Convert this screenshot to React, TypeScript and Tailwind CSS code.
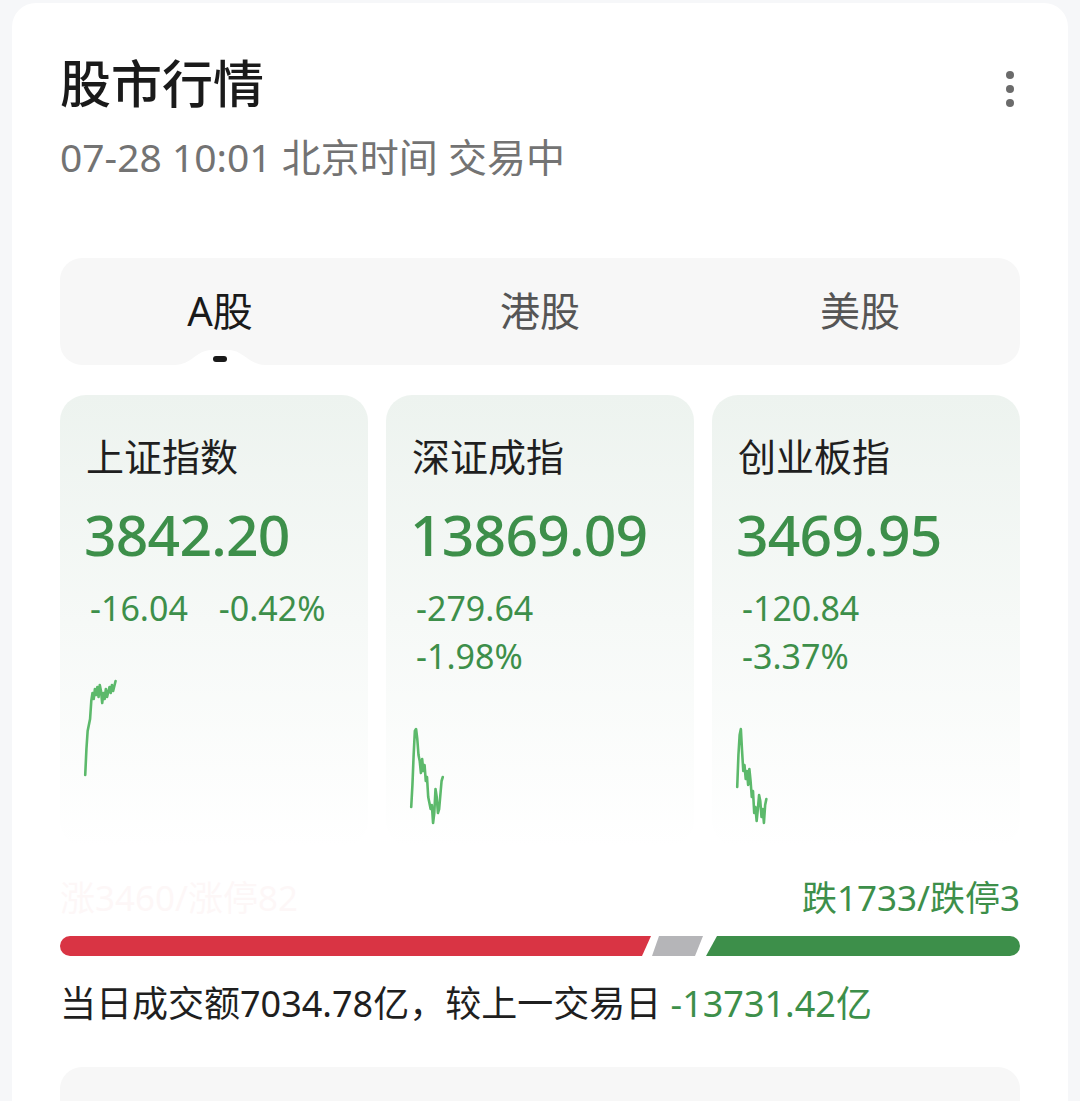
import React from "react";

type Index = {
  name: string;
  value: string;
  change: string;
  pct: string;
  stacked: boolean;
  line: string;
};

const indices: Index[] = [
  {
    name: "上证指数",
    value: "3842.20",
    change: "-16.04",
    pct: "-0.42%",
    stacked: false,
    line: "1,96 2,70 3,52 5,40 6,22 7,14 8,20 9,10 10,16 11,8 12,18 13,6 14,12 15,24 16,14 17,20 18,10 19,18 21,8 22,14 23,6 24,12 26,2",
  },
  {
    name: "深证成指",
    value: "13869.09",
    change: "-279.64",
    pct: "-1.98%",
    stacked: true,
    line: "1,82 2,60 3,30 4,6 5,4 6,14 7,30 8,36 9,48 10,34 11,46 12,40 13,56 14,52 15,72 16,78 17,84 18,80 19,98 20,88 21,64 22,72 23,88 24,84 25,70 26,56 27,52",
  },
  {
    name: "创业板指",
    value: "3469.95",
    change: "-120.84",
    pct: "-3.37%",
    stacked: true,
    line: "1,62 2,30 3,10 4,4 5,26 6,46 7,40 8,54 9,46 10,60 11,44 12,56 13,72 14,66 15,88 16,82 17,96 18,84 19,70 20,76 21,92 22,84 23,98 24,80 25,74",
  },
];

function Sparkline({ points }: { points: string }) {
  return (
    <svg width="34" height="100" viewBox="0 0 28 100" preserveAspectRatio="none" className="overflow-visible">
      <polyline
        points={points}
        fill="none"
        stroke="#5cb96b"
        strokeWidth="2.6"
        strokeLinejoin="round"
        strokeLinecap="round"
        vectorEffect="non-scaling-stroke"
      />
    </svg>
  );
}

function IndexCard({ item }: { item: Index }) {
  return (
    <div className="flex h-[452px] flex-col rounded-[26px] bg-gradient-to-b from-[#edf3ef] via-[#f6f9f7] to-white pl-[24px] pt-[36px]">
      <div className="pl-[2px] text-[38px] leading-[50px] text-[#1f1f1f]">{item.name}</div>
      <div className="mt-[19px] text-[57px] font-medium leading-[68px] text-[#3d8f4a] tracking-[-0.8px]">
        {item.value}
      </div>
      {item.stacked ? (
        <div className="mt-[16px] flex flex-col pl-[6px] text-[34px] leading-[48px] text-[#3d8f4a]">
          <span>{item.change}</span>
          <span>{item.pct}</span>
        </div>
      ) : (
        <div className="mt-[16px] flex gap-[31px] pl-[6px] text-[34px] leading-[48px] text-[#3d8f4a]">
          <span>{item.change}</span>
          <span>{item.pct}</span>
        </div>
      )}
      <div className={item.stacked ? "mt-[45px]" : "mt-[47px]"}>
        <Sparkline points={item.line} />
      </div>
    </div>
  );
}

export default function App() {
  return (
    <div
      className="min-h-[1101px] w-[1080px] overflow-hidden bg-[#f6f7f9] px-[12px] pt-[3px]"
      style={{ fontFamily: '"Noto Sans", "Noto Sans CJK SC", sans-serif' }}
    >
      <div className="min-h-[1098px] rounded-t-[24px] bg-white px-[48px] pt-[48px]">
        {/* header */}
        <div className="flex items-start justify-between">
          <div>
            <div className="text-[51px] font-medium leading-[64px] text-[#1a1a1a]">股市行情</div>
            <div className="mt-[18px] text-[39px] leading-[48px] text-[#737373]">
              07-28 10:01 北京时间 交易中
            </div>
          </div>
          <div className="mr-[6px] mt-[20px] flex flex-col items-center gap-[6px]">
            <span className="h-[8px] w-[8px] rounded-full bg-[#6b6b6b]" />
            <span className="h-[8px] w-[8px] rounded-full bg-[#6b6b6b]" />
            <span className="h-[8px] w-[8px] rounded-full bg-[#6b6b6b]" />
          </div>
        </div>

        {/* market tabs */}
        <div className="relative mt-[77px] grid h-[107px] grid-cols-3 items-center rounded-[22px] bg-[#f7f7f7] pb-[2px] text-center text-[40px]">
          <span className="text-[#1a1a1a]">A股</span>
          <span className="text-[#555555]">港股</span>
          <span className="text-[#555555]">美股</span>
          <svg className="absolute bottom-0 left-[115px]" width="90" height="15" viewBox="0 0 90 15">
            <path d="M0 15 C16 15 22 0 36 0 H54 C68 0 74 15 90 15 Z" fill="#ffffff" />
          </svg>
          <span className="absolute bottom-[3px] left-[153px] h-[6px] w-[14px] rounded-full bg-[#1a1a1a]" />
        </div>

        {/* index cards */}
        <div className="mt-[30px] grid grid-cols-3 gap-[18px]">
          {indices.map((item) => (
            <IndexCard key={item.name} item={item} />
          ))}
        </div>

        {/* advance / decline */}
        <div className="mt-[28px] flex items-center justify-between text-[35px] leading-[46px]">
          <span className="text-[#d93444] opacity-[0.035]">涨3460/涨停82</span>
          <span className="text-[#3d8f4a]">跌1733/跌停3</span>
        </div>
        <div className="mt-[15px] flex h-[20px]">
          <div className="h-full w-[591px] rounded-l-full bg-[#d93444] [clip-path:polygon(0_0,100%_0,calc(100%-9px)_100%,0_100%)]" />
          <div className="ml-[1px] h-full w-[51px] bg-[#b5b5b8] [clip-path:polygon(7px_0,100%_0,calc(100%-8px)_100%,0_100%)]" />
          <div className="ml-[3px] h-full flex-1 rounded-r-full bg-[#3d8f4a] [clip-path:polygon(11px_0,100%_0,100%_100%,0_100%)]" />
        </div>

        {/* turnover */}
        <div className="mt-[24px] text-[36px] leading-[48px] text-[#1f1f1f]">
          当日成交额7034.78亿，较上一交易日 <span className="text-[#3d8f4a]">-13731.42亿</span>
        </div>

        <div className="mt-[39px] h-[60px] rounded-t-[22px] bg-[#f7f7f7]" />
      </div>
    </div>
  );
}
